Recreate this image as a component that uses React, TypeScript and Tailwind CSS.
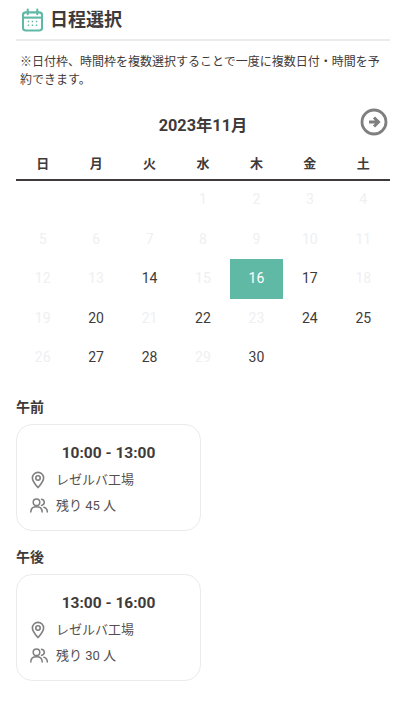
import React from "react";

const FONT = "font-['Roboto','Noto_Sans_CJK_JP',sans-serif]";
const weeks: (number | null)[][] = [
  [null, null, null, 1, 2, 3, 4],
  [5, 6, 7, 8, 9, 10, 11],
  [12, 13, 14, 15, 16, 17, 18],
  [19, 20, 21, 22, 23, 24, 25],
  [26, 27, 28, 29, 30, null, null],
];
const active = new Set([14, 16, 17, 20, 22, 24, 25, 27, 28, 30]);

function Pin() {
  return (
    <svg width="16" height="18" viewBox="0 0 16 18" fill="none" stroke="#7f7f7f" strokeWidth="1.6">
      <path d="M8 16.6C5.4 13.6 2.4 10.4 2.4 7a5.6 5.6 0 0 1 11.2 0c0 3.4-3 6.6-5.600 9.600z" strokeLinejoin="round" />
      <circle cx="8" cy="7" r="2.200" />
    </svg>
  );
}

function People() {
  return (
    <svg width="18" height="15" viewBox="0 0 18 15" fill="none" stroke="#7f7f7f" strokeWidth="1.500" strokeLinecap="round">
      <circle cx="6.500" cy="4.300" r="3.300" />
      <path d="M0.800 14c0-3.300 2.400-5.200 5.700-5.200s5.700 1.900 5.700 5.200" />
      <path d="M11.500 1.200c1.700.3 2.800 1.500 2.800 3.100s-1.100 2.800-2.800 3.100" />
      <path d="M14 9.300c2 .6 3.300 2.300 3.300 4.700" />
    </svg>
  );
}

function Slot({ title, time, left }: { title: string; time: string; left: number }) {
  return (
    <section>
      <h3 className="text-[14px] leading-[20px] font-bold text-[#3f3a3a]">{title}</h3>
      <div className="mt-[7px] w-[185px] h-[107px] rounded-[16px] border border-[#ebebeb] bg-white flex flex-col">
        <p className="mt-[17px] text-center text-[15.500px] leading-[22px] font-bold text-[#3f3a3a]">{time}</p>
        <div className="mt-[6px] h-[20px] pl-[13px] flex items-center">
          <span className="w-[26px] flex"><Pin /></span>
          <span className="text-[13px] text-[#555050]">レゼルバ工場</span>
        </div>
        <div className="mt-[6px] h-[20px] pl-[13px] flex items-center">
          <span className="w-[26px] flex"><People /></span>
          <span className="text-[13px] text-[#555050]">残り {left} 人</span>
        </div>
      </div>
    </section>
  );
}

export default function App() {
  return (
    <div className={`${FONT} w-[412px] h-[709px] overflow-hidden bg-white pl-4 pr-[22px] text-[#3f3a3a]`}>
      <header className="h-[41px] border-b-2 border-[#ebebeb] flex items-center pl-[6px] gap-[7px]">
        <svg width="21" height="24" viewBox="0 0 22 24" fill="none" stroke="#5fb9a5" strokeWidth="2.200">
          <rect x="1" y="4" width="20" height="19" rx="3" />
          <path d="M1 9.500h20" />
          <path d="M6 1v5M16 1v5" strokeLinecap="round" />
          <path d="M6 13.500h1.500M10.200 13.500h1.500M14.500 13.500h1.500M6 17.500h1.500M10.200 17.500h1.500M14.500 17.500h1.500" strokeWidth="1.600" />
        </svg>
        <h2 className="text-[18px] leading-[24px] font-bold text-[#3f3a3a]">日程選択</h2>
      </header>

      <p className="mt-[12px] px-1 text-[12px] leading-[18px] text-[#3f3a3a]">
        ※日付枠、時間枠を複数選択することで一度に複数日付・時間を予約できます。
      </p>

      <div className="mt-[21px] relative h-[32px] flex items-center justify-center">
        <span className="text-[16.300px] font-bold text-[#3f3a3a]">2023年11月</span>
        <svg className="absolute right-[2px] top-[-2px]" width="28" height="28" viewBox="0 0 28 28" fill="none" stroke="#7f7f7f">
          <circle cx="14" cy="14" r="12" strokeWidth="2.800" />
          <path d="M9 14h9M14 9.500l4.500 4.500-4.500 4.500" strokeWidth="3" />
        </svg>
      </div>

      <div className="mt-[10px] grid grid-cols-7 h-[29px] border-b-2 border-[#3f3a3a] items-center pb-[3px]">
        {["日", "月", "火", "水", "木", "金", "土"].map((d) => (
          <div key={d} className="text-center text-[13px] font-bold text-[#3f3a3a]">{d}</div>
        ))}
      </div>

      <div className="mt-[-1px] grid grid-cols-7 auto-rows-[39.500px]">
        {weeks.flat().map((d, i) => (
          <div
            key={i}
            className={
              "flex items-center justify-center text-[14px] " +
              (d === 16
                ? "bg-[#5fb9a5] text-white"
                : d && active.has(d)
                ? "text-[#3f3a3a]"
                : "text-[#eef0f2]")
            }
          >
            {d}
          </div>
        ))}
      </div>

      <div className="mt-[19px] flex flex-col gap-[16px]">
        <Slot title="午前" time="10:00 - 13:00" left={45} />
        <Slot title="午後" time="13:00 - 16:00" left={30} />
      </div>
    </div>
  );
}
